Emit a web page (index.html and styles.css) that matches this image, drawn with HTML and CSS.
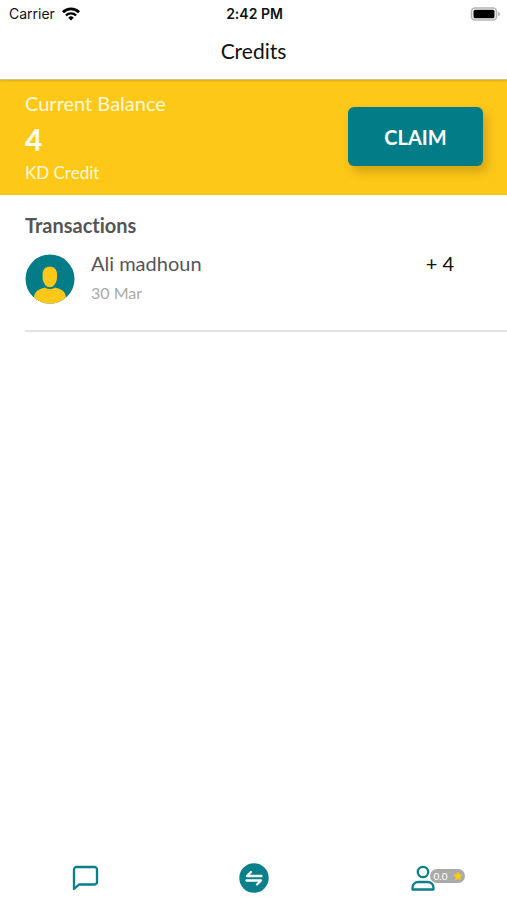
FILE: index.html
```html
<!DOCTYPE html>
<html lang="en">
<head>
<meta charset="utf-8">
<meta name="viewport" content="width=device-width, initial-scale=1">
<title>Credits</title>
<link rel="stylesheet" href="styles.css">
</head>
<body>
<div class="status">
  <div class="status-left">
    <span>Carrier</span>
    <svg class="wifi" viewBox="0 0 18 14" width="18" height="14" fill="none" stroke="#000" aria-hidden="true">
      <path d="M1 5.200a11.300 11.300 0 0 1 16 0" stroke-width="2.800"/>
      <path d="M3.900 8.500a7.200 7.200 0 0 1 10.200 0" stroke-width="2.400"/>
      <path d="M9 13.500 6.200 10.700a4 4 0 0 1 5.600 0z" fill="#000" stroke="none"/>
    </svg>
  </div>
  <time class="clock">2:42 PM</time>
  <div class="status-right">
    <svg viewBox="0 0 30 14" width="30" height="14" aria-hidden="true">
      <rect x="1.500" y="1" width="25" height="12" rx="3.500" fill="#fff" stroke="#b4b4b4" stroke-width="1.600"/>
      <rect x="3.500" y="2.800" width="21" height="8.400" rx="1.500" fill="#000"/>
      <path d="M28 4.800q2 .7 2 2.200t-2 2.200z" fill="#b4b4b4"/>
    </svg>
  </div>
</div>
<header class="title-bar"><h1>Credits</h1></header>
<main>
  <section class="balance">
    <div>
      <p class="balance-label">Current Balance</p>
      <p class="balance-value">4</p>
      <p class="balance-unit">KD Credit</p>
    </div>
    <button class="claim" type="button">CLAIM</button>
  </section>
  <section class="transactions">
    <h2>Transactions</h2>
    <ul>
      <li class="transaction">
        <svg class="avatar" viewBox="0 0 50 50" width="50" height="50" aria-hidden="true">
          <clipPath id="disc"><circle cx="25" cy="25" r="24.500"/></clipPath>
          <g clip-path="url(#disc)">
            <rect width="50" height="50" fill="#027c86"/>
            <path d="M9 50V44c0-6 4-9 11-10.500q5 3 10 0C37 35 41 38 41 44v6z" fill="#fec819"/>
            <path d="M24.800 12.800c4.500 0 7.200 2.700 7.200 7.200v3.500c0 4.500-3 9.800-7.200 9.800s-7.200-5.300-7.200-9.800V20c0-4.500 2.700-7.200 7.200-7.200z" fill="#fec819"/>
          </g>
        </svg>
        <div class="who">
          <p class="name">Ali madhoun</p>
          <p class="date">30 Mar</p>
        </div>
        <p class="amount">+ 4</p>
      </li>
    </ul>
  </section>
</main>
<nav class="tabs">
  <a class="tab" href="#messages" aria-label="Messages">
    <svg viewBox="0 0 28 28" width="28" height="28" fill="none" stroke="#087f89" stroke-width="2.300" stroke-linejoin="round" aria-hidden="true">
      <path d="M3 25V5.500A2.500 2.500 0 0 1 5.500 3h18A2.500 2.500 0 0 1 26 5.500v12.500a2.500 2.500 0 0 1-2.500 2.500H8z"/>
    </svg>
  </a>
  <a class="tab" href="#credits" aria-label="Credits" aria-current="page">
    <svg viewBox="0 0 30 30" width="30" height="30" aria-hidden="true">
      <circle cx="15" cy="15" r="14.700" fill="#087f89"/>
      <path d="M22.500 13H8L12 9M7.500 17.500H22L18 21.500" fill="none" stroke="#fff" stroke-width="2.300" stroke-linecap="round" stroke-linejoin="round"/>
    </svg>
  </a>
  <a class="tab" href="#profile" aria-label="Profile">
    <span class="profile">
      <svg viewBox="0 0 24 28" width="24" height="28" fill="none" stroke="#087f89" stroke-width="2.300" stroke-linejoin="round" aria-hidden="true">
        <circle cx="12" cy="8" r="5.200"/>
        <path d="M1.500 25.500v-1.500c0-3.500 2.500-6 6-6h9c3.500 0 6 2.500 6 6v1.500z"/>
      </svg>
      <span class="rating">0.0
        <svg viewBox="0 0 10 10" width="10" height="10" aria-hidden="true"><path d="M5 .3l1.400 3 3.300.4-2.400 2.300.6 3.400L5 7.800 2.100 9.400l.6-3.400L.3 3.700l3.300-.4z" fill="#fccb12"/></svg>
      </span>
    </span>
  </a>
</nav>
</body>
</html>
```

FILE: styles.css
```css
* {
  box-sizing: border-box;
}

body {
  margin: 0;
  min-height: 100vh;
  display: flex;
  flex-direction: column;
  background: #fff;
  color: #111;
  font-family: Lato, "Liberation Sans", sans-serif;
  font-variant-ligatures: none;
}

h1, h2, p, ul {
  margin: 0;
  padding: 0;
}

.status {
  display: grid;
  grid-template-columns: 1fr auto 1fr;
  align-items: center;
  height: 27px;
  padding: 0 7px 0 9px;
  font-family: Inter, "Liberation Sans", sans-serif;
  font-size: 14px;
}

.status-left {
  display: flex;
  align-items: center;
  gap: 7px;
}

.status-right {
  display: flex;
  justify-content: flex-end;
}

.clock {
  font-weight: 600;
}

.title-bar {
  position: relative;
  height: 53px;
  border-bottom: 1px solid #d3c394;
  box-shadow: 0 1px 2px rgba(0, 0, 0, 0.15);
  text-align: center;
}

.title-bar h1 {
  font-size: 21px;
  font-weight: 400;
  line-height: 48px;
}

.balance {
  display: flex;
  justify-content: space-between;
  align-items: center;
  padding: 7px 24px 9px 25px;
  background: #fec819;
  color: #fff;
}

.balance-label {
  font-size: 20px;
  line-height: 32px;
  color: #fff8d8;
}

.balance-value {
  font-size: 30px;
  font-weight: 700;
  line-height: 40px;
}

.balance-unit {
  font-size: 17px;
  line-height: 27px;
  color: #fff8d8;
}

.claim {
  width: 135px;
  height: 59px;
  border: 0;
  border-radius: 6px;
  background: #027c86;
  box-shadow: 4px 6px 10px rgba(80, 60, 0, 0.25);
  color: #fff;
  font: 700 20px Lato, sans-serif;
}

.transactions {
  padding: 16px 0 0 25px;
}

.transactions h2 {
  color: #555;
  font-size: 20px;
  font-weight: 700;
  line-height: 28px;
}

.transactions ul {
  list-style: none;
}

.transaction {
  display: flex;
  align-items: flex-start;
  padding: 9px 53px 22px 0;
  border-bottom: 2px solid #e3e3e3;
}

.avatar {
  margin-top: 6px;
}

.who {
  flex: 1;
  padding-left: 16px;
}

.name {
  color: #555;
  font-size: 20px;
  line-height: 30px;
}

.date {
  color: #aaa;
  font-size: 16px;
  line-height: 30px;
}

.amount {
  font-size: 20px;
  line-height: 30px;
}

.tabs {
  display: grid;
  grid-template-columns: repeat(3, 1fr);
  height: 44px;
  margin-top: auto;
}

.tab {
  display: flex;
  align-items: center;
  justify-content: center;
}

.tab svg {
  display: block;
}

.profile {
  position: relative;
}

.rating {
  position: absolute;
  top: 5px;
  left: 19px;
  display: flex;
  align-items: center;
  justify-content: space-between;
  width: 35px;
  height: 14px;
  padding: 0 2px 0 4px;
  border-radius: 7px;
  background: #aaa;
  color: #fff;
  font-size: 10px;
}
```
